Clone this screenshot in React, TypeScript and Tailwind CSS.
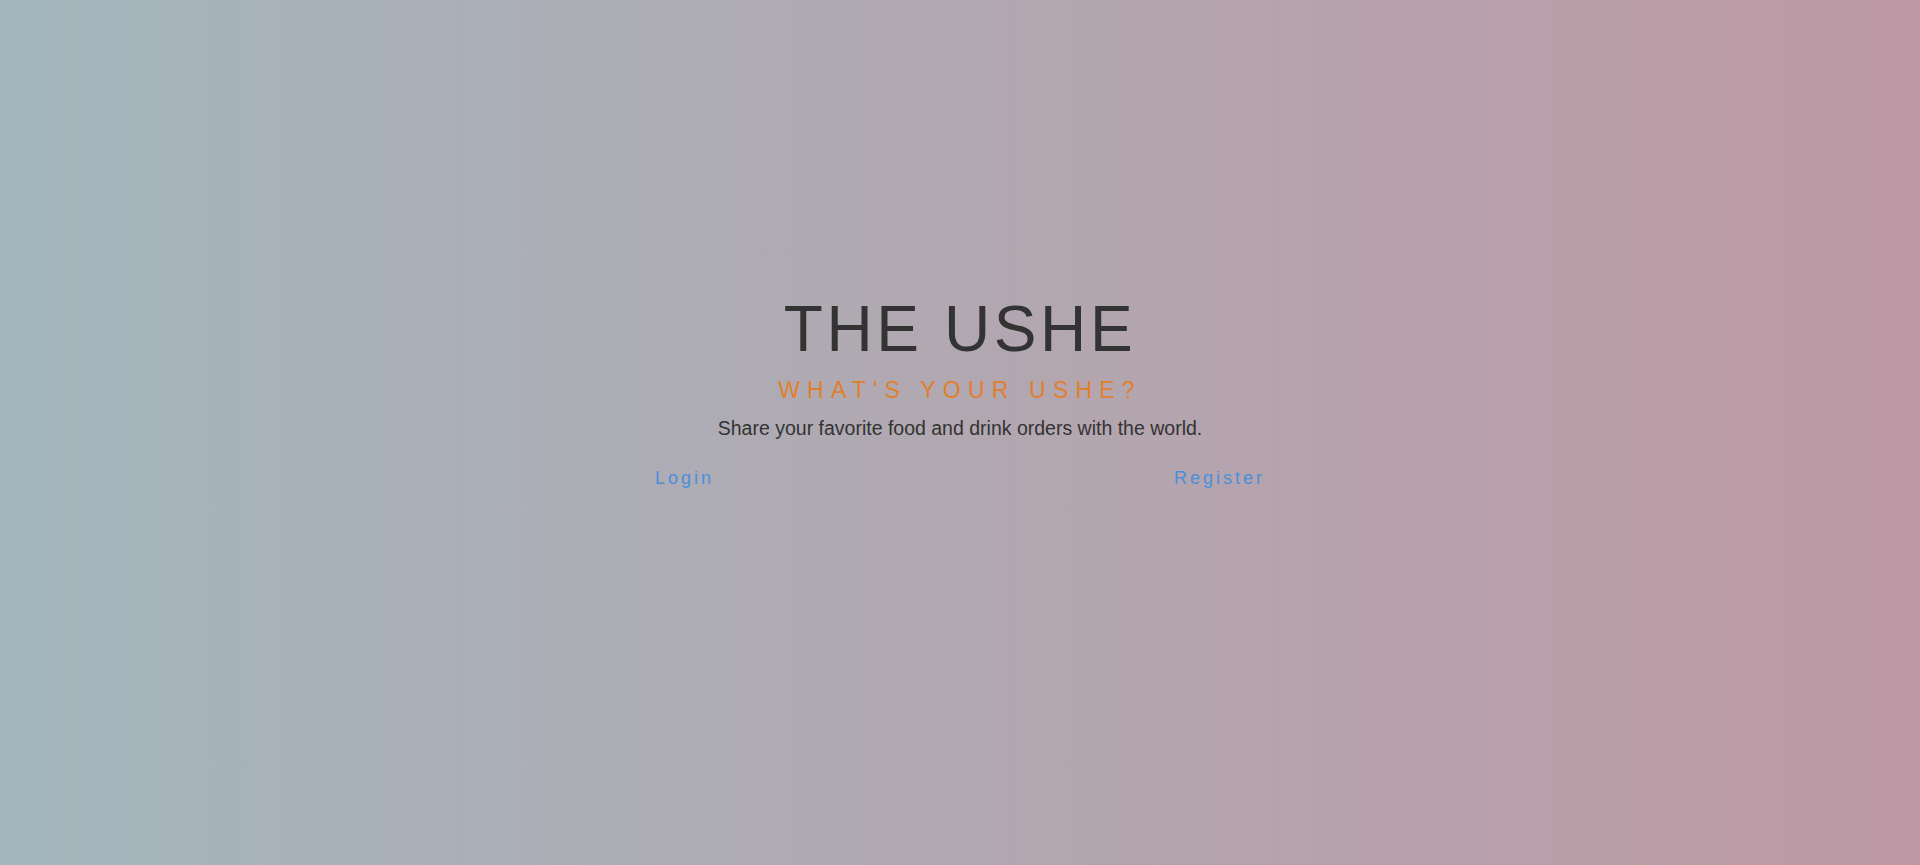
export default function App() {
  return (
    <div className="min-h-[865px] w-full bg-linear-to-r from-[#a3b6bd] to-[#bd99a4] font-['Liberation_Sans',Arial,sans-serif] text-[#333333]">
      <div className="flex flex-col items-center pt-[297px] text-center">
        <h1 className="mb-[18px] text-[64px] leading-none font-normal tracking-[3.6px]">THE USHE</h1>
        <h2 className="mb-[17px] text-[23px] leading-none font-normal tracking-[7.2px] text-[#e07f2c]">
          WHAT&apos;S YOUR USHE?
        </h2>
        <p className="mb-[30px] text-[19.5px] leading-none">
          Share your favorite food and drink orders with the world.
        </p>
        <div className="flex w-[610px] justify-between text-[18px] leading-none tracking-[3px] text-[#4a8fdc]">
          <a href="#" className="hover:underline">Login</a>
          <a href="#" className="hover:underline">Register</a>
        </div>
      </div>
    </div>
  )
}
